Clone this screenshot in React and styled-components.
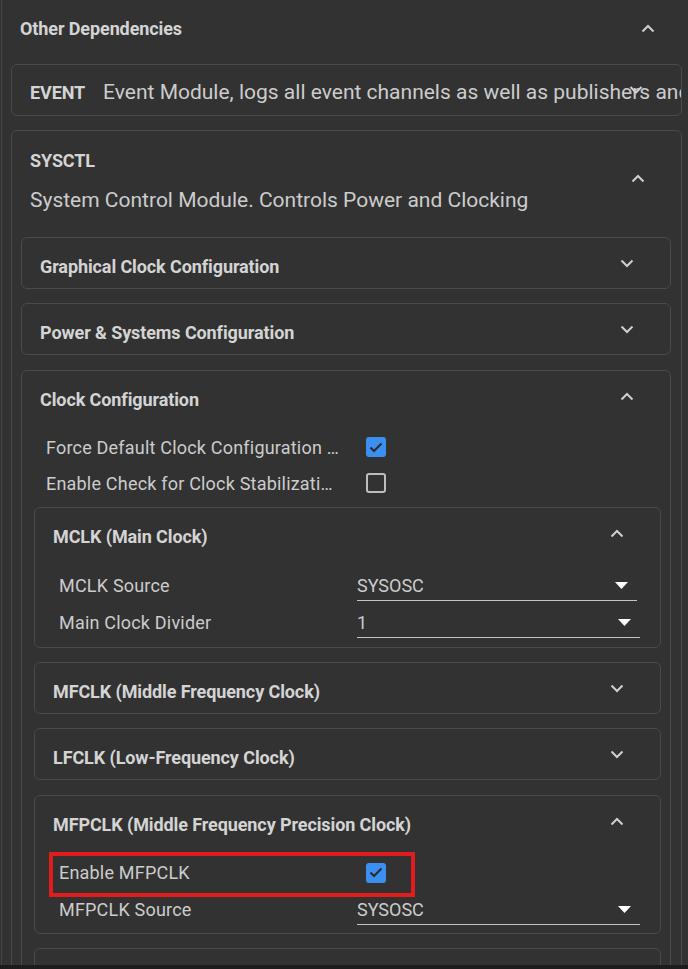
import React from "react";
import styled, { createGlobalStyle } from "styled-components";

const Global = createGlobalStyle`
  html, body { margin: 0; padding: 0; background: #323232; height: 969px; overflow: hidden; }
  body { font-family: Roboto, "Liberation Sans", sans-serif; color: #cccccc; }
  * { box-sizing: border-box; }
`;

const Panel = styled.div`
  margin-left: 1px;
  border-left: 1px solid #444;
  min-height: 969px;
`;

const PanelHeader = styled.div`
  height: 56px;
  display: flex;
  align-items: center;
  justify-content: space-between;
  padding: 0 33px 0 18px;
`;

const Title = styled.span`
  font-size: 18px;
  font-weight: 700;
  color: #d4d4d4;
  white-space: nowrap;
  letter-spacing: -0.1px;
`;

const CardTitle = styled(Title)`
  padding-top: 6px;
`;

const EventTitle = styled(Title)`
  padding-top: 4px;
`;

const PanelBody = styled.div`
  padding: 8px 6px 0 9px;
`;

const Card = styled.div`
  border: 1px solid #4a4a4a;
  border-radius: 6px;
  background: #323232;
  margin-bottom: ${(p) => p.$mb ?? 14}px;
  overflow: hidden;
`;

const CardHeader = styled.div`
  position: relative;
  height: 50px;
  display: flex;
  align-items: center;
  justify-content: space-between;
  padding: 0 36px 0 18px;
`;

const EventHeader = styled(CardHeader)`
  justify-content: flex-start;
  gap: 18px;
`;

const EventDesc = styled.span`
  font-size: 21px;
  color: #cccccc;
  white-space: nowrap;
  padding-top: 3px;
`;

const OverChevron = styled.span`
  position: absolute;
  right: 38px;
  top: 50%;
  transform: translateY(-50%);
  display: flex;
`;

const TallHeader = styled.div`
  height: 94px;
  display: flex;
  align-items: center;
  justify-content: space-between;
  padding: 0 36px 0 18px;
`;

const HeaderText = styled.div`
  display: flex;
  flex-direction: column;
  gap: 17px;
  padding-top: 6px;
`;

const Desc = styled.span`
  font-size: 21px;
  color: #cccccc;
`;

const CardBody = styled.div`
  padding: ${(p) => p.$pad};
`;

const Row = styled.div`
  position: relative;
  height: ${(p) => p.$h}px;
  display: flex;
  align-items: center;
  padding-left: ${(p) => p.$indent}px;
`;

const Label = styled.span`
  width: ${(p) => p.$w}px;
  flex: none;
  font-size: 18px;
  letter-spacing: 0.2px;
  color: #cccccc;
  white-space: nowrap;
  overflow: hidden;
  text-overflow: ellipsis;
  padding-right: 12px;
`;

const Box = styled.span`
  margin-left: 9px;
  width: 20px;
  height: 20px;
  border-radius: 3px;
  display: flex;
  align-items: center;
  justify-content: center;
  background: ${(p) => (p.$on ? "#3a8ff0" : "transparent")};
  border: ${(p) => (p.$on ? "none" : "2px solid #bdbdbd")};
`;

const Select = styled.div`
  width: ${(p) => p.$w}px;
  height: 30px;
  display: flex;
  align-items: center;
  justify-content: space-between;
  border-bottom: 1px solid #c4c4c4;
  padding-right: 9px;
  font-size: 18px;
  color: #cccccc;
`;

const Highlight = styled.span`
  position: absolute;
  left: ${(p) => p.$left}px;
  top: -2px;
  width: 366px;
  height: 45px;
  border: 4px solid #e01c1c;
  pointer-events: none;
`;

const BottomStrip = styled.div`
  position: fixed;
  left: 0;
  right: 0;
  bottom: 0;
  height: 4px;
  background: #1c1c1c;
`;

const Chevron = ({ up }) => (
  <svg width="14" height="9" viewBox="0 0 14 9" style={{ display: "block" }}>
    <polyline
      points={up ? "1.5,7.5 7,2 12.5,7.5" : "1.5,1.5 7,7 12.5,1.5"}
      fill="none"
      stroke="#cfcfcf"
      strokeWidth="2"
    />
  </svg>
);

const Triangle = () => (
  <svg width="13" height="7" viewBox="0 0 13 7" style={{ display: "block" }}>
    <polygon points="0,0 13,0 6.5,7" fill="#ffffff" />
  </svg>
);

const Check = ({ on }) => (
  <Box $on={on}>
    {on && (
      <svg width="14" height="11" viewBox="0 0 14 11">
        <polyline points="1.5,5.5 5,9 12.5,1.5" fill="none" stroke="#2b2b2b" strokeWidth="2" />
      </svg>
    )}
  </Box>
);

const Collapsed = ({ title, mb }) => (
  <Card $mb={mb}>
    <CardHeader>
      <CardTitle>{title}</CardTitle>
      <Chevron />
    </CardHeader>
  </Card>
);

export default function App() {
  return (
    <>
      <Global />
      <Panel>
        <PanelHeader>
          <Title>Other Dependencies</Title>
          <Chevron up />
        </PanelHeader>
        <PanelBody>
          <Card>
            <EventHeader>
              <EventTitle>EVENT</EventTitle>
              <EventDesc>Event Module, logs all event channels as well as publishers and subscribers</EventDesc>
              <OverChevron>
                <Chevron />
              </OverChevron>
            </EventHeader>
          </Card>

          <Card>
            <TallHeader>
              <HeaderText>
                <Title>SYSCTL</Title>
                <Desc>System Control Module. Controls Power and Clocking</Desc>
              </HeaderText>
              <Chevron up />
            </TallHeader>
            <CardBody $pad="12px 10px 0 9px">
              <Collapsed title="Graphical Clock Configuration" />
              <Collapsed title="Power & Systems Configuration" mb={15} />

              <Card>
                <CardHeader>
                  <CardTitle>Clock Configuration</CardTitle>
                  <Chevron up />
                </CardHeader>
                <CardBody $pad="8px 9px 0 12px">
                  <Row $h={36} $indent={12}>
                    <Label $w={311}>Force Default Clock Configuration …</Label>
                    <Check on />
                  </Row>
                  <Row $h={36} $indent={12}>
                    <Label $w={311}>Enable Check for Clock Stabilizati…</Label>
                    <Check />
                  </Row>
                  <div style={{ height: 6 }} />

                  <Card>
                    <CardHeader>
                      <CardTitle>MCLK (Main Clock)</CardTitle>
                      <Chevron up />
                    </CardHeader>
                    <CardBody $pad="9px 0 6px 24px">
                      <Row $h={37} $indent={0}>
                        <Label $w={298}>MCLK Source</Label>
                        <Select $w={280}>
                          <span>SYSOSC</span>
                          <Triangle />
                        </Select>
                      </Row>
                      <Row $h={37} $indent={0}>
                        <Label $w={298}>Main Clock Divider</Label>
                        <Select $w={283}>
                          <span>1</span>
                          <Triangle />
                        </Select>
                      </Row>
                    </CardBody>
                  </Card>

                  <Collapsed title="MFCLK (Middle Frequency Clock)" />
                  <Collapsed title="LFCLK (Low-Frequency Clock)" mb={15} />

                  <Card>
                    <CardHeader>
                      <CardTitle>MFPCLK (Middle Frequency Precision Clock)</CardTitle>
                      <Chevron up />
                    </CardHeader>
                    <CardBody $pad="8px 0 5px 24px">
                      <Row $h={37} $indent={0}>
                        <Label $w={298}>Enable MFPCLK</Label>
                        <Check on />
                        <Highlight $left={-10} />
                      </Row>
                      <Row $h={37} $indent={0}>
                        <Label $w={298}>MFPCLK Source</Label>
                        <Select $w={283}>
                          <span>SYSOSC</span>
                          <Triangle />
                        </Select>
                      </Row>
                    </CardBody>
                  </Card>

                  <Collapsed title="HFCLK (High Frequency Clock)" />
                </CardBody>
              </Card>
            </CardBody>
          </Card>
        </PanelBody>
      </Panel>
      <BottomStrip />
    </>
  );
}
